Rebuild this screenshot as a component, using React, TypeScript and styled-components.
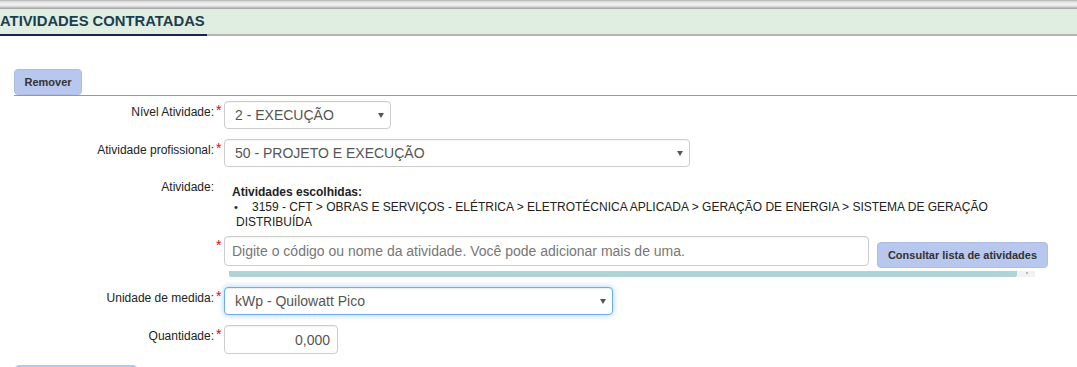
import React from "react";
import styled, { createGlobalStyle } from "styled-components";

const Global = createGlobalStyle`
  html, body { margin: 0; padding: 0; background: #fff; }
  body { font-family: "Liberation Sans", Arial, sans-serif; color: #333; overflow: hidden; }
  * { box-sizing: border-box; }
`;

const Page = styled.div`
  width: 1077px;
  height: 367px;
  overflow: hidden;
  display: flex;
  flex-direction: column;
  & > * { flex-shrink: 0; }
`;

const TopStrip = styled.div`
  height: 9px;
  background: linear-gradient(
    #a6a6a6 0px, #d4d4d4 1px, #ececec 3px, #f2f2f2 5px, #d2d2d2 7px, #a9a9a9 8px, #a9a9a9 9px
  );
`;

const SectionHeader = styled.div`
  height: 27px;
  background: #dfeee0;
  border-bottom: 2px solid #b3b3b3;
  display: flex;
  align-items: stretch;
`;

const SectionTitle = styled.h2`
  margin: 0 0 -2px 0;
  padding: 0 2px 0 0;
  font-size: 14.8px;
  font-weight: bold;
  color: #1d3d4f;
  line-height: 25px;
  border-bottom: 2px solid #14294a;
  white-space: nowrap;
`;

const Toolbar = styled.div`
  margin: 33px 0 0 14px;
  border-bottom: 1px solid #999;
  display: flex;
`;

const FormButton = styled.button<{ $w: number }>`
  width: ${(p) => p.$w}px;
  height: 26px;
  padding: 0;
  background: #b7c7ed;
  border: 1px solid #aebde4;
  border-radius: 4px;
  font-family: "Liberation Sans", Arial, sans-serif;
  font-size: 11px;
  font-weight: bold;
  color: #333;
  cursor: pointer;
`;

const Row = styled.div<{ $mt: number }>`
  display: flex;
  align-items: flex-start;
  margin-top: ${(p) => p.$mt}px;
`;

const Label = styled.div<{ $pt?: number }>`
  width: 214px;
  text-align: right;
  font-size: 12px;
  line-height: 14px;
  color: #222;
  padding-top: ${(p) => p.$pt ?? 4}px;
  white-space: nowrap;
`;

const Req = styled.span<{ $visible?: boolean }>`
  width: 10px;
  padding-left: 2px;
  color: #e00;
  font-size: 14px;
  line-height: 14px;
  padding-top: 2px;
  visibility: ${(p) => (p.$visible === false ? "hidden" : "visible")};
`;

const Select = styled.div<{ $w: number; $focus?: boolean }>`
  width: ${(p) => p.$w}px;
  height: 28px;
  border: 1px solid ${(p) => (p.$focus ? "#66afe9" : "#ccc")};
  border-radius: 4px;
  box-shadow: ${(p) =>
    p.$focus
      ? "inset 0 1px 1px rgba(0,0,0,.075), 0 0 6px rgba(102,175,233,.6)"
      : "inset 0 1px 1px rgba(0,0,0,.04)"};
  display: flex;
  align-items: center;
  justify-content: space-between;
  padding: 0 6px 0 10px;
  font-size: 14px;
  color: #555;
  background: #fff;
`;

const Arrow = styled.span`
  width: 0;
  height: 0;
  border-left: 3px solid transparent;
  border-right: 3px solid transparent;
  border-top: 5px solid #555;
`;

const TextBox = styled.div<{ $w: number; $h: number; $align?: string }>`
  width: ${(p) => p.$w}px;
  height: ${(p) => p.$h}px;
  border: 1px solid #ccc;
  border-radius: 4px;
  box-shadow: inset 0 1px 1px rgba(0, 0, 0, 0.05);
  display: flex;
  align-items: center;
  justify-content: ${(p) => p.$align ?? "flex-start"};
  padding: 0 7px;
  font-size: 14px;
  color: #555;
  background: #fff;
  white-space: nowrap;
`;

const Placeholder = styled.span`
  color: #777;
`;

const ChosenBlock = styled.div`
  display: flex;
  flex-direction: column;
  padding-left: 8px;
  padding-top: 5px;
  width: 780px;
`;

const ChosenTitle = styled.div`
  font-size: 12px;
  font-weight: bold;
  line-height: 14px;
  color: #222;
`;

const ChosenList = styled.ul`
  margin: 1px 0 0 0;
  padding: 0 0 0 4px;
  list-style: none;
`;

const ChosenItem = styled.li`
  font-size: 12px;
  line-height: 15px;
  color: #222;
  &::before {
    content: "•";
    display: inline-block;
    width: 18px;
    margin-left: -2px;
    font-size: 11px;
  }
`;

const FieldGroup = styled.div`
  display: flex;
  flex-direction: column;
`;

const InputLine = styled.div`
  display: flex;
  align-items: flex-start;
  gap: 8px;
`;

const ButtonWrap = styled.div`
  padding-top: 6px;
`;

const TrackRow = styled.div`
  display: flex;
  margin: 3px 0 0 5px;
  height: 6px;
`;

const Track = styled.div`
  width: 788px;
  background: #b0d4d6;
  border-radius: 0 0 2px 2px;
`;

const TrackEnd = styled.div`
  width: 18px;
  background: #f2f2f2;
  position: relative;
  &::after {
    content: "";
    position: absolute;
    left: 9px;
    top: 1px;
    width: 2px;
    height: 2px;
    background: #b8b8b8;
  }
`;

const BottomButton = styled.div`
  margin: 11px 0 0 15px;
  width: 122px;
  height: 26px;
  background: #b7c7ed;
  border-radius: 4px 4px 0 0;
`;

export default function App() {
  return (
    <Page>
      <Global />
      <TopStrip />
      <SectionHeader>
        <SectionTitle>ATIVIDADES CONTRATADAS</SectionTitle>
      </SectionHeader>

      <Toolbar>
        <FormButton $w={68}>Remover</FormButton>
      </Toolbar>

      <Row $mt={5}>
        <Label>Nível Atividade:</Label>
        <Req>*</Req>
        <Select $w={167}>
          <span>2 - EXECUÇÃO</span>
          <Arrow />
        </Select>
      </Row>

      <Row $mt={10}>
        <Label>Atividade profissional:</Label>
        <Req>*</Req>
        <Select $w={466}>
          <span>50 - PROJETO E EXECUÇÃO</span>
          <Arrow />
        </Select>
      </Row>

      <Row $mt={13}>
        <Label $pt={0}>Atividade:</Label>
        <Req $visible={false}>*</Req>
        <FieldGroup>
          <ChosenBlock>
            <ChosenTitle>Atividades escolhidas:</ChosenTitle>
            <ChosenList>
              <ChosenItem>
                3159 - CFT &gt; OBRAS E SERVIÇOS - ELÉTRICA &gt; ELETROTÉCNICA APLICADA &gt; GERAÇÃO DE ENERGIA &gt; SISTEMA DE GERAÇÃO DISTRIBUÍDA
              </ChosenItem>
            </ChosenList>
          </ChosenBlock>
        </FieldGroup>
      </Row>

      <Row $mt={6}>
        <Label $pt={0} />
        <Req>*</Req>
        <FieldGroup>
          <InputLine>
            <TextBox $w={645} $h={30}>
              <Placeholder>
                Digite o código ou nome da atividade. Você pode adicionar mais de uma.
              </Placeholder>
            </TextBox>
            <ButtonWrap>
              <FormButton $w={171}>Consultar lista de atividades</FormButton>
            </ButtonWrap>
          </InputLine>
          <TrackRow>
            <Track />
            <TrackEnd />
          </TrackRow>
        </FieldGroup>
      </Row>

      <Row $mt={10}>
        <Label>Unidade de medida:</Label>
        <Req>*</Req>
        <Select $w={389} $focus>
          <span>kWp - Quilowatt Pico</span>
          <Arrow />
        </Select>
      </Row>

      <Row $mt={10}>
        <Label>Quantidade:</Label>
        <Req>*</Req>
        <TextBox $w={114} $h={29} $align="flex-end">
          0,000
        </TextBox>
      </Row>

      <BottomButton />
    </Page>
  );
}
